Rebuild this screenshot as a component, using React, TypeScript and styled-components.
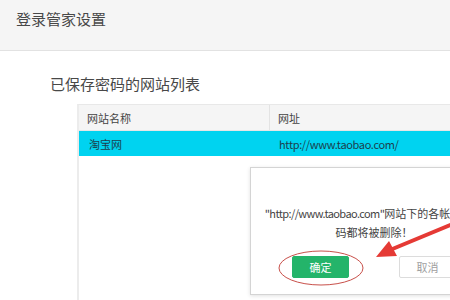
import React from "react";
import styled, { createGlobalStyle } from "styled-components";

const Global = createGlobalStyle`
  html, body { margin: 0; padding: 0; background: #fff; }
  body { width: 450px; height: 300px; overflow: hidden; font-family: "Noto Sans CJK SC", "Microsoft YaHei", sans-serif; color: #444; }
`;

const Page = styled.div`
  position: relative;
  width: 450px;
  height: 300px;
  overflow: hidden;
  display: flex;
  flex-direction: column;
`;

const Header = styled.div`
  height: 51px;
  flex: none;
  background: #f5f5f5;
  border-bottom: 1px solid #e2e2e2;
  display: flex;
  align-items: flex-start;
  padding: 7px 0 0 16px;
  box-sizing: border-box;
  font-size: 15px;
  line-height: 24px;
  color: #484848;
`;

const Body = styled.div`
  flex: 1;
  padding: 22px 0 0 50px;
  display: flex;
  flex-direction: column;
`;

const SectionTitle = styled.div`
  font-size: 15px;
  line-height: 22px;
  color: #484848;
`;

const Table = styled.div`
  margin: 9px 0 0 27px;
  width: 420px;
  flex: 1;
  border-left: 2px solid #ececec;
  border-top: 1px solid #e8e8e8;
  display: flex;
  flex-direction: column;
`;

const Row = styled.div<{ $head?: boolean; $selected?: boolean }>`
  display: grid;
  grid-template-columns: 190px 1fr;
  height: 25px;
  align-items: center;
  font-size: 11px;
  background: ${(p) => (p.$selected ? "#00d3f0" : p.$head ? "#f5f5f5" : "#fff")};
  color: ${(p) => (p.$selected ? "#1d3f4d" : "#444")};
  border-bottom: ${(p) => (p.$head ? "1px solid #e6e6e6" : "none")};
`;

const Cell = styled.div<{ $divider?: boolean; $pad: number }>`
  height: 100%;
  display: flex;
  align-items: center;
  padding-left: ${(p) => p.$pad}px;
  box-sizing: border-box;
  border-left: ${(p) => (p.$divider ? "1px solid #e3e3e3" : "none")};
`;

const Latin = styled.span<{ $spacing: number }>`
  letter-spacing: ${(p) => p.$spacing}px;
`;

const Dialog = styled.div`
  position: absolute;
  left: 250px;
  top: 167px;
  width: 248px;
  height: 128px;
  box-sizing: border-box;
  background: #fff;
  border: 1px solid #d4d4d4;
  box-shadow: 0 1px 4px rgba(0, 0, 0, 0.12);
  display: flex;
  flex-direction: column;
  align-items: center;
  padding-top: 36px;
`;

const Message = styled.div`
  font-size: 11px;
  line-height: 19px;
  color: #444;
  text-align: center;
  white-space: nowrap;
`;

const Buttons = styled.div`
  display: flex;
  gap: 50px;
  margin-top: 14px;
`;

const Button = styled.div<{ $primary?: boolean }>`
  width: 57px;
  height: 22px;
  box-sizing: border-box;
  border-radius: 2px;
  display: flex;
  align-items: center;
  justify-content: center;
  font-size: 11px;
  background: ${(p) => (p.$primary ? "#24b46a" : "#fff")};
  color: ${(p) => (p.$primary ? "#fff" : "#a0a0a0")};
  border: 1px solid ${(p) => (p.$primary ? "#24b46a" : "#dcdcdc")};
`;

const Overlay = styled.svg`
  position: absolute;
  left: 0;
  top: 0;
  pointer-events: none;
`;

export default function App() {
  return (
    <Page>
      <Global />
      <Header>登录管家设置</Header>
      <Body>
        <SectionTitle>已保存密码的网站列表</SectionTitle>
        <Table>
          <Row $head>
            <Cell $pad={8}>网站名称</Cell>
            <Cell $pad={8} $divider>网址</Cell>
          </Row>
          <Row $selected>
            <Cell $pad={10}>淘宝网</Cell>
            <Cell $pad={10}>
              <Latin $spacing={-0.35}>http://www.taobao.com/</Latin>
            </Cell>
          </Row>
        </Table>
      </Body>
      <Dialog>
        <Message>
          <Latin $spacing={-0.6}>"http://www.taobao.com"</Latin>网站下的各帐号和密
          <br />
          码都将被删除！
        </Message>
        <Buttons>
          <Button $primary>确定</Button>
          <Button>取消</Button>
        </Buttons>
      </Dialog>
      <Overlay width="450" height="300" viewBox="0 0 450 300">
        <ellipse cx="321" cy="268" rx="42" ry="17" fill="none" stroke="#c8504a" strokeWidth="1" />
        <line x1="455" y1="223" x2="390" y2="250" stroke="#e53a35" strokeWidth="4" strokeLinecap="round" />
        <polygon points="376,257 397,256 389,241" fill="#e53a35" />
      </Overlay>
    </Page>
  );
}
